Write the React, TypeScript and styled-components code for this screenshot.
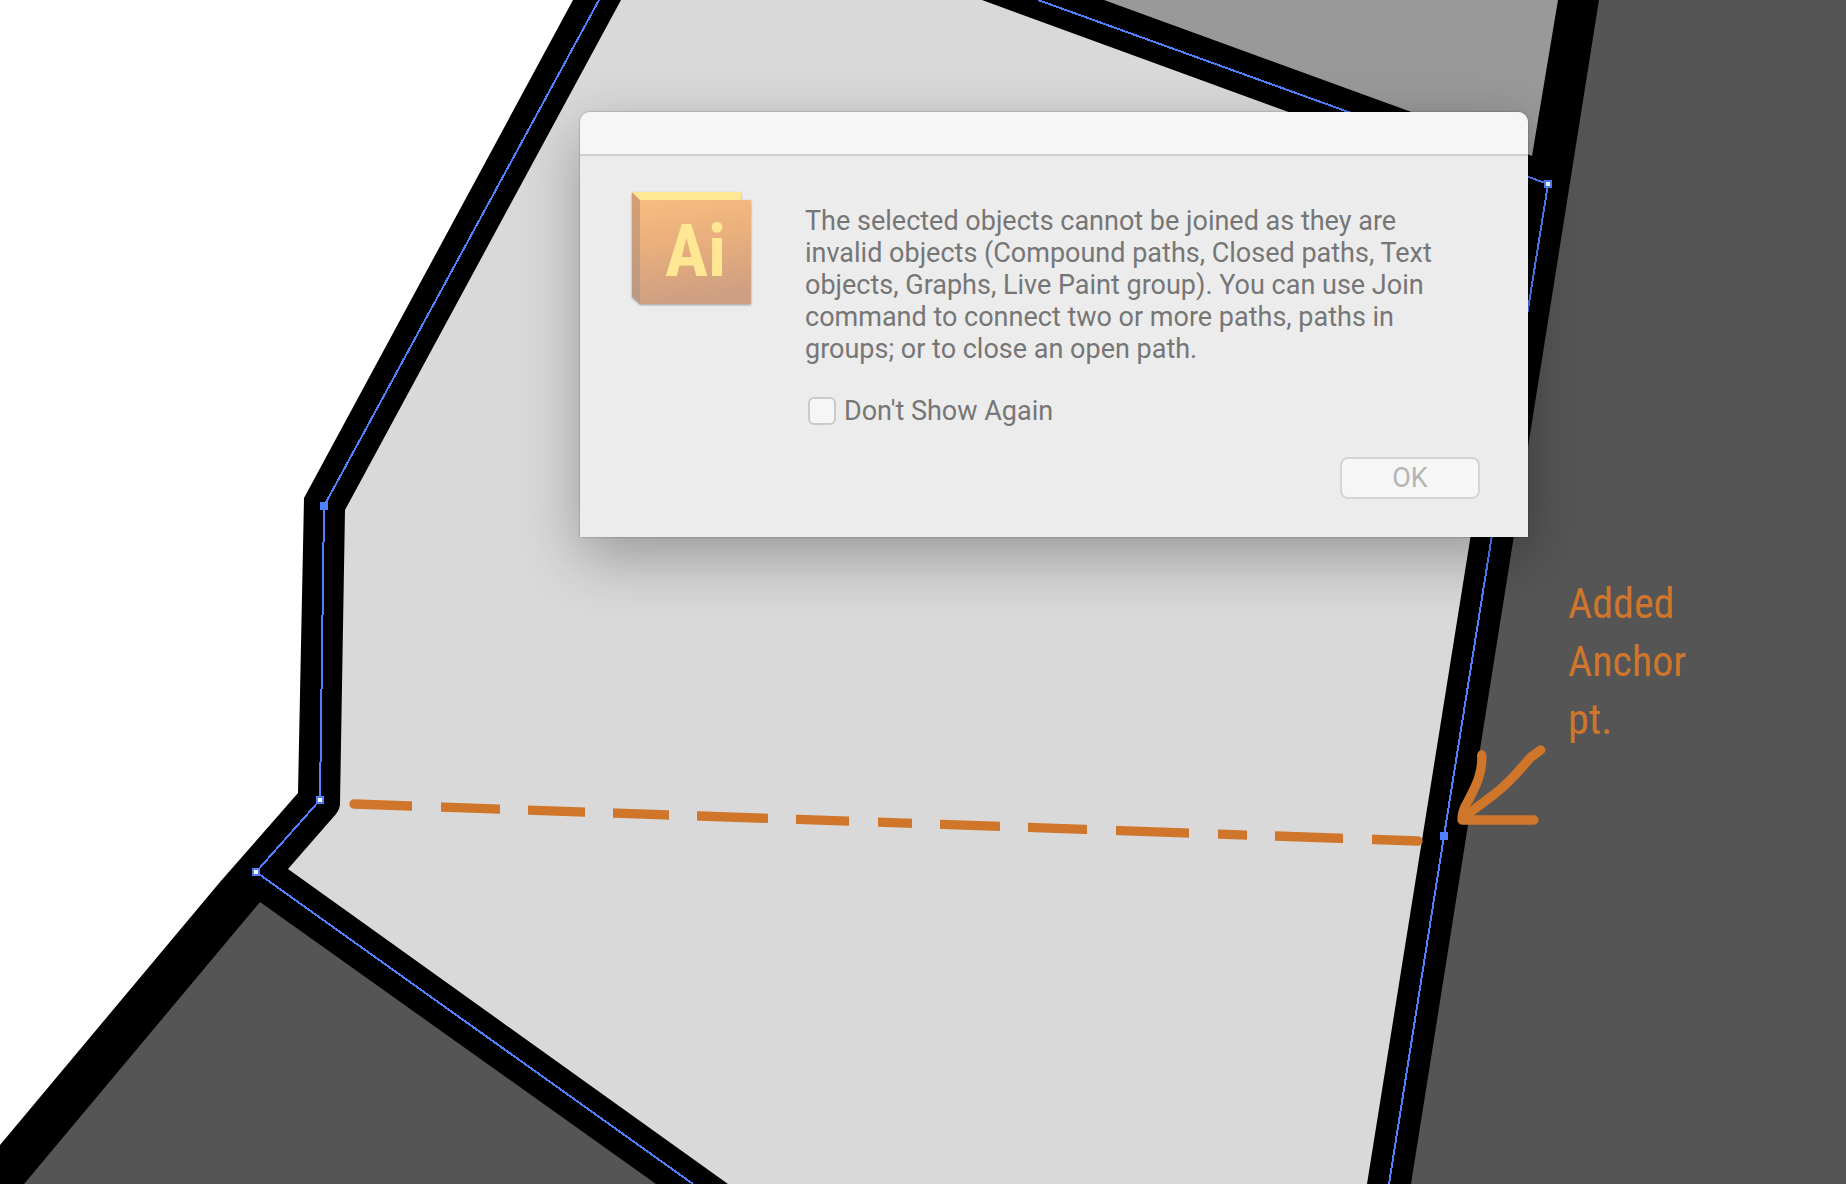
import React from "react";
import styled, { createGlobalStyle } from "styled-components";

const GlobalStyle = createGlobalStyle`
  * { box-sizing: border-box; }
  body { margin: 0; background: #ffffff; }
`;

const Workspace = styled.main`
  position: relative;
  min-height: 100vh;
  overflow: hidden;
  background: #ffffff;
  font-family: Roboto, "Liberation Sans", sans-serif;
`;

const Artwork = styled.svg`
  position: absolute;
  inset: 0;
  width: 100%;
  height: 100%;
`;

const Note = styled.p`
  position: absolute;
  left: 1568px;
  top: 575px;
  width: 130px;
  margin: 0;
  color: #d0762a;
  font: 400 42px/58px "Roboto Condensed", "Open Sans Condensed Light", Lato, sans-serif;
`;

const Dialog = styled.section`
  position: absolute;
  left: 580px;
  top: 112px;
  width: 948px;
  background: #ececec;
  border-radius: 10px 10px 0 0;
  box-shadow: 0 0 2px rgba(0, 0, 0, 0.4), 0 20px 60px rgba(0, 0, 0, 0.3);
`;

const TitleBar = styled.header`
  height: 44px;
  background: #f6f6f6;
  border-bottom: 2px solid #d0d0d0;
  border-radius: 10px 10px 0 0;
`;

const Body = styled.div`
  display: flex;
  gap: 52px;
  padding: 34px 48px 0 50px;
`;

const AppIcon = styled.svg`
  flex: none;
  width: 123px;
  height: 118px;
`;

const Content = styled.div`
  flex: 1;
  padding-top: 15px;
`;

const Message = styled.p`
  margin: 0;
  color: #767676;
  font-size: 27px;
  line-height: 32px;
`;

const Option = styled.label`
  display: flex;
  align-items: center;
  gap: 8px;
  margin: 30px 0 0 3px;
  color: #767676;
  font-size: 27px;
  line-height: 32px;
`;

const Checkbox = styled.input`
  appearance: none;
  width: 28px;
  height: 28px;
  margin: 0;
  background: #f6f6f6;
  border: 2px solid #cbcbcb;
  border-radius: 6px;
`;

const Actions = styled.footer`
  display: flex;
  justify-content: flex-end;
  padding: 30px 48px 38px;
`;

const Button = styled.button`
  width: 140px;
  height: 42px;
  padding: 0;
  background: #f6f6f6;
  border: 2px solid #d4d4d4;
  border-radius: 8px;
  color: #b4b4b4;
  font-family: inherit;
  font-size: 27px;
  line-height: 32px;
`;

const LINES = [
  "The selected objects cannot be joined as they are",
  "invalid objects (Compound paths, Closed paths, Text",
  "objects, Graphs, Live Paint group). You can use Join",
  "command to connect two or more paths, paths in",
  "groups; or to close an open path.",
];

const DASHES: [number, number][] = [
  [348, 412], [441, 500], [528, 585], [613, 669], [697, 768], [796, 849], [878, 912],
  [940, 1000], [1028, 1087], [1116, 1189], [1218, 1247], [1275, 1343], [1372, 1425],
];

const Anchor = ({ x, y, selected }: { x: number; y: number; selected?: boolean }) => (
  <g>
    <rect x={x - 4} y={y - 4} width="8" height="8" fill="#4f80ff" />
    {!selected && <rect x={x - 2} y={y - 2} width="4" height="4" fill="#ffffff" />}
  </g>
);

export default function App() {
  return (
    <Workspace>
      <GlobalStyle />
      <Artwork viewBox="0 0 1846 1184" preserveAspectRatio="xMidYMid slice" aria-hidden="true">
        <path d="M573 0H1846V1184H0V1145L220 882L298 793L304 498Z" fill="#000000" />
        <path d="M1599 0H1846V1184H1411Z" fill="#555555" />
        <path d="M260 902L656 1184H24Z" fill="#555555" />
        <path d="M1104 0H1558L1532 156Z" fill="#999999" />
        <path
          d="M621 0H982L1524 198L1470 540L1367 1184H728L288 869L336 814Q340 809 340 803L345 510Z"
          fill="#d9d9d9"
        />
        <path
          d="M599 0L324 506L320 800L256 872L693 1184M1038 0L1548 184L1444 836L1389 1184"
          fill="none"
          stroke="#4f80ff"
          strokeWidth="2"
          shapeRendering="crispEdges"
        />
        <Anchor x={324} y={506} selected />
        <Anchor x={320} y={800} />
        <Anchor x={256} y={872} />
        <Anchor x={1548} y={184} />
        <Anchor x={1444} y={836} selected />
        <clipPath id="dashes">
          {DASHES.map(([from, to]) => (
            <rect key={from} x={from} y="780" width={to - from} height="80" />
          ))}
        </clipPath>
        <g fill="none" stroke="#d0762a" strokeWidth="9.3" strokeLinecap="round" strokeLinejoin="round">
          <path d="M354 804L1418 841" clipPath="url(#dashes)" />
          <path d="M1481.7 755C1483 775 1474 789 1467 803Q1462 811 1462 820H1534" />
          <path d="M1540.7 750L1530 758C1512 779 1504 787 1492 796L1464 817" />
        </g>
      </Artwork>

      <Note>Added Anchor pt.</Note>

      <Dialog role="alertdialog" aria-labelledby="join-message">
        <TitleBar />
        <Body>
          <AppIcon viewBox="0 0 123 118" role="img" aria-label="Illustrator">
            <defs>
              <linearGradient id="face" x1="0" y1="0" x2="0.15" y2="1">
                <stop offset="0" stopColor="#f6bd80" />
                <stop offset="0.45" stopColor="#e9af7d" />
                <stop offset="1" stopColor="#cf9f82" />
              </linearGradient>
              <linearGradient id="side" x1="0" y1="0" x2="0" y2="1">
                <stop offset="0" stopColor="#d69f73" />
                <stop offset="1" stopColor="#b89a85" />
              </linearGradient>
              <filter id="iconShadow" x="-10%" y="-10%" width="120%" height="120%">
                <feDropShadow dx="0" dy="1" stdDeviation="1" floodColor="#000000" floodOpacity="0.35" />
              </filter>
            </defs>
            <g filter="url(#iconShadow)">
              <path d="M2 2L10 10V114L2 107Z" fill="url(#side)" />
              <path d="M2 2H111V10H10Z" fill="#ffe793" />
              <rect x="10" y="10" width="111" height="104" fill="url(#face)" />
            </g>
            <text
              x="35"
              y="86"
              fill="#ffe793"
              fontFamily='"Roboto Condensed", "Open Sans Condensed", sans-serif'
              fontSize="72"
              fontWeight="700"
            >
              Ai
            </text>
          </AppIcon>
          <Content>
            <Message id="join-message">
              {LINES.map((line) => (
                <React.Fragment key={line}>
                  {line}
                  <br />
                </React.Fragment>
              ))}
            </Message>
            <Option>
              <Checkbox type="checkbox" />
              Don't Show Again
            </Option>
          </Content>
        </Body>
        <Actions>
          <Button type="button">OK</Button>
        </Actions>
      </Dialog>
    </Workspace>
  );
}
